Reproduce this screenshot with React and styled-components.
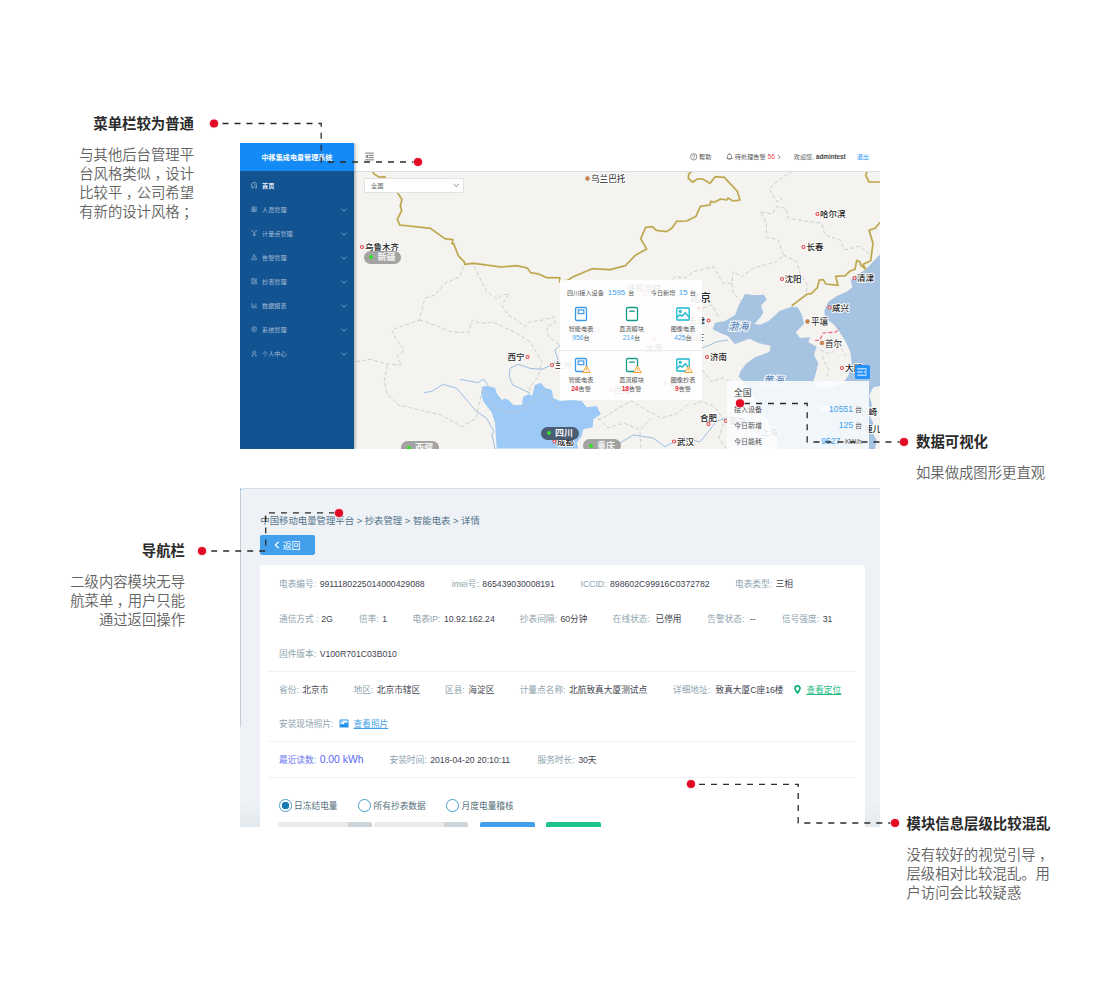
import React from "react";
import styled, { createGlobalStyle, css } from "styled-components";

const sans = `"Liberation Sans", "Noto Sans CJK SC", sans-serif`;

const Global = createGlobalStyle`
  *, *::before, *::after { box-sizing: border-box; }
  body { margin: 0; background: #fff; font-family: ${sans}; }
`;

/* ---------- page and notes ---------- */

const Page = styled.div`
  position: relative;
  display: flex;
  width: 1120px;
  height: 1000px;
  overflow: hidden;
  background: #fff;
`;

const NoteColumn = styled.aside`
  width: 240px;
  display: flex;
  flex-direction: column;
  align-items: ${(p) => (p.$right ? "flex-end" : "flex-start")};
  text-align: ${(p) => (p.$right ? "right" : "left")};
  padding-top: ${(p) => p.$top}px;
`;

const NoteBox = styled.section`
  margin: ${(p) => p.$margin};
  font-family: "Noto Sans CJK SC", sans-serif;
  white-space: nowrap;
`;

const NoteTitle = styled.h2`
  margin: 0 0 11px;
  font-size: 14.4px;
  line-height: 20px;
  font-weight: 700;
  color: #2a2a2a;
`;

const NoteText = styled.p`
  margin: 0;
  font-size: 14.35px;
  line-height: 19.1px;
  font-weight: 350;
  color: #626262;
`;

const Mark = styled.span`
  display: inline-block;
  width: 1em;
  text-indent: 0.24em;
`;

const Screens = styled.main`
  width: 640px;
  padding-top: 143px;
  display: flex;
  flex-direction: column;
  gap: 39px;
`;

const Connectors = styled.svg`
  position: absolute;
  inset: 0;
  z-index: 5;
  pointer-events: none;
`;

function Note({ title, lines, margin }) {
  return (
    <NoteBox $margin={margin}>
      <NoteTitle>{title}</NoteTitle>
      {lines.map((line) => (
        <NoteText key={line}>
          {line.split(/([，；])/).map((s, i) =>
            s === "，" || s === "；" ? <Mark key={i}>{s}</Mark> : s
          )}
        </NoteText>
      ))}
    </NoteBox>
  );
}

/* ---------- dashboard ---------- */

const Dashboard = styled.section`
  display: flex;
  height: 306px;
  overflow: hidden;
`;

const Sidebar = styled.nav`
  position: relative;
  z-index: 2;
  width: 114px;
  background: #125392;
  box-shadow: 1px 0 3px rgba(0, 0, 0, 0.35);
`;

const Brand = styled.div`
  height: 28px;
  display: flex;
  align-items: center;
  justify-content: center;
  background: #148af7;
  color: #fff;
  font-size: 7.1px;
  font-weight: 700;
  margin-bottom: 2.6px;
`;

const MenuItem = styled.div`
  height: 24px;
  display: flex;
  align-items: center;
  gap: 5px;
  padding: 0 7px 0 10.5px;
  font-size: 6.15px;
  font-weight: ${(p) => (p.$active ? 700 : 400)};
  color: ${(p) => (p.$active ? "#e6eef6" : "#a3bcd6")};

  svg { flex: none; }
  svg:last-child:not(:first-child) { margin-left: auto; }
`;

const Body = styled.div`
  flex: 1;
  display: flex;
  flex-direction: column;
`;

const TopBar = styled.header`
  height: 28.5px;
  flex: none;
  display: flex;
  align-items: center;
  padding: 0 11px 0 10.5px;
  background: #fff;
  border-bottom: 1px solid #dfdfdf;
  font-size: 6.15px;
  color: #555;
  white-space: nowrap;
`;

const TopItem = styled.span`
  display: flex;
  align-items: center;
  gap: 2px;
  margin-left: ${(p) => p.$ml || "0"};
  color: ${(p) => p.$color || "inherit"};
  b { font-size: 6.3px; color: #444; }
  em { font-style: normal; font-size: 6.8px; color: #f5484e; }
`;

const MapArea = styled.div`
  position: relative;
  flex: 1;
  overflow: hidden;
  background: #f4f3ef;
`;

const MapDrawing = styled.svg`
  position: absolute;
  left: 0;
  bottom: 0;
  font-family: "Noto Sans CJK SC", sans-serif;
`;

const RegionSelect = styled.div`
  position: absolute;
  left: 10px;
  top: 6.5px;
  width: 100px;
  height: 14.5px;
  display: flex;
  align-items: center;
  justify-content: space-between;
  padding: 0 4px 0 6px;
  background: #fff;
  border: 1px solid #e2e2e2;
  border-radius: 1px;
  font-size: 6.2px;
  color: #666;
`;

const RegionPill = styled.div`
  position: absolute;
  left: ${(p) => p.$x - 354}px;
  top: ${(p) => p.$y - 171.5}px;
  width: 37.5px;
  height: 13px;
  display: flex;
  align-items: center;
  gap: 4px;
  padding-left: 5.5px;
  border-radius: 7px;
  background: ${(p) => (p.$active ? "rgba(66,84,104,.92)" : "rgba(140,140,140,.78)")};
  color: #f4f4f4;
  font-size: 9px;
  font-weight: 700;
  line-height: 12px;

  &::before {
    content: "";
    width: 4.4px;
    height: 4.4px;
    border-radius: 50%;
    background: #35e02c;
  }
`;

const Popup = styled.div`
  position: absolute;
  left: 206px;
  top: 108.5px;
  width: 142px;
  height: 120px;
  background: rgba(255, 255, 255, 0.9);
  font-size: 6.15px;
  color: #555;
`;

const PopupHead = styled.div`
  display: flex;
  align-items: center;
  height: 25px;
  padding: 0 6px 0 7px;
`;

const Num = styled.span`
  color: #3fa0ee;
  font-size: ${(p) => p.$size || 7.8}px;
  margin: ${(p) => p.$m || "0"};
`;

const Spacer = styled.span`
  flex: 1;
`;

const DeviceGrid = styled.div`
  display: grid;
  grid-template-columns: 42px 59px 44px;
  height: ${(p) => p.$h}px;
  padding-top: ${(p) => p.$pt}px;
  border-bottom: ${(p) => (p.$line ? "1px solid #eaeaea" : "0")};
`;

const Device = styled.div`
  display: flex;
  flex-direction: column;
  align-items: center;
  line-height: 9px;
  white-space: nowrap;
  svg { margin-bottom: 2px; overflow: visible; }
`;

const Count = styled.span`
  line-height: 9px;
  b {
    font-weight: ${(p) => (p.$alarm ? 700 : 400)};
    font-size: 6.7px;
    color: ${(p) => (p.$alarm ? "#f02a3c" : "#3fa0ee")};
  }
`;

const Summary = styled.div`
  position: absolute;
  left: 373px;
  top: 209.5px;
  width: 142px;
  height: 80px;
  padding: 4px 7px 0;
  background: rgba(250, 252, 254, 0.9);
  color: #555;
  font-size: 7px;
`;

const SummaryTitle = styled.div`
  font-size: 8.8px;
  line-height: 16px;
  color: #444;
`;

const SummaryRow = styled.div`
  display: flex;
  justify-content: space-between;
  align-items: center;
  height: 16px;
`;

const FoldButton = styled.div`
  position: absolute;
  left: 501px;
  top: 193.5px;
  width: 14.5px;
  height: 14px;
  display: flex;
  align-items: center;
  justify-content: center;
  border-radius: 1.5px;
  background: #2492fa;
`;

/* ---------- detail page ---------- */

const Detail = styled.section`
  position: relative;
  height: 339px;
  overflow: hidden;
  display: flex;
  flex-direction: column;
  padding: 0 15.5px 0 20.3px;
  background: linear-gradient(#eef2f6 0 92%, #e4e9ed);
  border-top: 1px solid #d2dee9;

  &::before {
    content: "";
    position: absolute;
    left: 0;
    top: -1px;
    width: 1px;
    height: 239px;
    background: linear-gradient(#4b9de0 0 2px, #c6cdd4 2px);
  }
`;

const Crumbs = styled.div`
  flex: none;
  margin-top: 24px;
  height: 16px;
  line-height: 16px;
  font-size: 9.39px;
  color: #54738a;
  white-space: nowrap;
`;

const BackButton = styled.div`
  flex: none;
  margin-top: 6px;
  width: 55px;
  height: 20px;
  display: flex;
  align-items: center;
  gap: 1.5px;
  padding-left: 13px;
  border-radius: 2px;
  background: #429fec;
  color: #fff;
  font-size: 8.8px;
`;

const Card = styled.div`
  margin-top: 10px;
  flex: none;
  height: 270px;
  padding: 1px 9px 0 8px;
  border-radius: 3px 3px 0 0;
  background: #fff;
`;

const Row = styled.div`
  display: grid;
  grid-template-columns: ${(p) => p.$cols};
  align-items: center;
  height: ${(p) => p.$h || 35}px;
  padding-left: 10.7px;
  font-size: 8.7px;
  color: #3f4450;
  white-space: nowrap;
`;

const Block = styled.div`
  border-bottom: 1px solid #f1f2f3;
`;

const Field = styled.div`
  display: flex;
  align-items: center;
  gap: ${(p) => p.$gap || 3.5}px;
  ${(p) => p.$accent && css`
    color: #5868f5;
    span:first-child { color: #6c78f3; }
    span:last-child { font-size: 10.4px; }
  `}
`;

const Label = styled.span`
  color: #8ea3ae;
`;

const Link = styled.a`
  color: ${(p) => p.$color};
  text-decoration: underline;
  text-underline-offset: 1px;
`;

const Radios = styled.div`
  display: grid;
  grid-template-columns: 79.5px 88px auto;
  height: 43.5px;
  padding: 12px 0 0 10.7px;
  font-size: 8.7px;
  color: #56707c;
`;

const Radio = styled.label`
  display: flex;
  align-items: center;
  gap: 2.5px;
  height: 30px;
  white-space: nowrap;

  &::before {
    content: "";
    width: 12.6px;
    height: 12.6px;
    border-radius: 50%;
    border: 1px solid #4a9ccb;
    background: ${(p) => (p.$on ? "radial-gradient(circle, #1879b4 0 3.5px, #fff 4px)" : "#fff")};
  }
`;

const Controls = styled.div`
  display: flex;
  padding-left: 10.2px;
`;

const Control = styled.div`
  width: ${(p) => p.$w}px;
  height: 20px;
  margin-right: ${(p) => p.$mr}px;
  border-radius: 2px;
  background: ${(p) => p.$bg};
`;

/* ---------- small icons ---------- */

const Ico = ({ size = 7, color = "currentColor", w = 1.4, children }) => (
  <svg width={size} height={size} viewBox="0 0 16 16" fill="none" stroke={color} strokeWidth={w} strokeLinecap="round" strokeLinejoin="round">
    {children}
  </svg>
);

const Chevron = ({ size = 6, w = 1.8 }) => (
  <Ico size={size} w={w}><path d="M2 5.5l6 5.5 6-5.5" /></Ico>
);

const menu = [
  ["首页", <path d="M4.500 14a6.800 6.800 0 1 1 7 0M2.500 14h3M10.500 14h3M8 10l2.500-3.500" />],
  ["人员管理", <path d="M4 2.500h9v5H4zM6.500 2.500v5M2 9.500h12l-1 4H2zM6 9.500v4M10 9.500v4" />],
  ["计量点管理", <path d="M3 2l5 6 5-6M8 8v6M5.500 14h5M1.500 2h3M11.500 2h3M5.500 10.500h5" />],
  ["告警管理", <path d="M8 2l6.500 12h-13zM8 6.500v3.500M8 12v.2" />],
  ["抄表管理", <path d="M1.500 2h13v12h-13zM5 2v12M8 5.500h4M8 8h4M8 10.500h4" />],
  ["数据报表", <path d="M2 3v11h12M5.500 7.500V11M8.500 9V11M12 4v7" />],
  ["系统管理", <path d="M8 1.500l2 1.600 2.600-.2.500 2.600L15 8l-1.900 2.500-.5 2.600-2.600-.2L8 14.500l-2-1.600-2.600.2-.5-2.600L1 8l1.900-2.500.5-2.600 2.600.2zM5.500 8a2.500 2.500 0 1 0 5 0 2.500 2.500 0 1 0-5 0" />],
  ["个人中心", <path d="M4.500 5.500a3.500 3.500 0 1 0 7 0 3.500 3.500 0 1 0-7 0M3.500 14.500c0-3 1.500-5 3-5.500M12.500 14.500c0-3-1.500-5-3-5.500M2.500 14.500h3M10.500 14.500h3" />],
];

const Warn = () => (
  <g transform="translate(8.500 8.500)">
    <path d="M4 .5L7.800 7H.2z" fill="#fff8ec" stroke="#f7a53b" strokeWidth="1" strokeLinejoin="round" />
    <path d="M4 2.500v2.300M4 5.600v.5" stroke="#f7a53b" strokeWidth=".8" />
  </g>
);

function DeviceIcon({ kind, warn }) {
  return (
    <svg width="14" height="16" viewBox="0 0 14 16" fill="none" strokeWidth="1.300">
      {kind === "meter" && (
        <g stroke="#3c98e8">
          <rect x="1.500" y="1.500" width="11" height="13" rx="1.200" />
          <rect x="4.200" y="4" width="5.600" height="3.600" strokeWidth="1.200" />
        </g>
      )}
      {kind === "dc" && (
        <g stroke="#179b88">
          <rect x="1.500" y="1.500" width="11" height="13" rx="1.200" />
          <path d="M4.200 5.200h5.600" />
        </g>
      )}
      {kind === "image" && (
        <g stroke="#17b9cf" strokeLinejoin="round">
          <rect x=".8" y="2" width="12.400" height="12" rx=".8" />
          <path d="M1 11.500l3-3 2 1.700 3.200-3.400 4 4.500" />
          <circle cx="4.300" cy="5.300" r="1" />
        </g>
      )}
      {warn && <Warn />}
    </svg>
  );
}

/* ---------- map ---------- */

const borders = [
  "372.3,171 374,174 379,177 384.5,176.7 386,179 390.7,178.7 397.3,192.7 402,199.3 400.3,206 401.7,210.7 397.3,219.3 399.7,225 430.3,228.3 445,238.7 453,239.7 452,243.7 453.7,243.7 458.3,255.7 464.3,262 464.7,264.3 473.7,263.3 501,267 516.7,265.7 527.3,268 530.7,272.7 538.7,274 546.7,277.7 559.7,277.7 559.7,282 568.3,280 572.7,277 592.3,268.7 610,269.7 625.3,265.7 635.3,255.3 646.7,249 640.7,238.7 645.7,227.3 652.3,226.7 656.3,230.3 666.3,231.7 671.7,228.3 676.7,221.3 686.7,221 696,216.3 700.3,206.3 710,205 710.7,201.3 714,202.3 720.7,199 726.7,200 728,198 733,201 740,200 737.3,191.3 724.3,177.3 715.3,176.7 710,183.3 702.7,179 697.3,179 692.7,182.3 688.3,178.3 688.7,174.3 692,171",
  "867.3,171 865.7,175.3 869,182 880,182",
  "880,222.3 875,228.3 869,230.3 873,243.3 870.7,260.7 863,264.3 865.7,269.3 860.7,265 860,262 856.7,260.3 855,269.3 850,271 845.3,275.7 835.7,276.3 838,285.3 826,284 823.3,279.7 819.3,280 817.3,287.7 811.3,293.7 807.3,294 791.7,305.7",
];

const provinces = [
  "474,266 480,278 486.7,291.7 496.7,299 502,295 509.3,294 501.7,305 508.3,315 516.7,320 525,326.7 530,321.7 543.3,320 554,316.7 555,323 546.7,326.7 548.3,336.7 560,345",
  "463.3,266 460,276.7 445,283.3 435,295 425,298 419.3,320 391.7,330 396.7,340 404.3,350 396.7,356.7 402,365 386.7,364 370,359.3 354,362",
  "419.3,320 435,325 450,331.7 468.3,332.7 472.3,320 480,323.3 493.3,322.3 516.7,333.3 530,341.7 541.7,361.7 538.3,376.7 530,386.7 529,394",
  "387.3,365 384.3,380 386.7,393.3 398.3,405 420,410 441.7,415 461.7,426.7 476,418.3 480,400 483,388 492,404 500,409 513,413 522,409 530,403 544,390 552,400 562,412",
  "793,171 783.3,176.7 769,188.3 776.7,201.7 782,199 778,195",
  "869.3,254 860,246 845,250 840,240 825,235 821.7,223.3 803.3,220.7 788.3,218.3 786,208.3 776.7,206.7 772,214 760,211.7 766.7,223.3 766,236.7 778.3,240 783.3,255 776.7,261.7 753.3,268.3 741.7,276.7 733.3,271.7 731.7,283.3 723.3,283.3 713.3,266.7 693.3,271.7 685,278 675,276.7 670,283",
  "783.3,255 796.7,261.7 800,273.3 807.3,285 806,294",
  "731.7,283.3 733,293 741,301",
  "703,308 712,305 719,318",
  "598,420 606,416 620,407 632,401 646,410 661,418 676,414 690,403",
  "702,370 712,382 722,378 736,384",
  "598,418 608,428 624,423 640,430 651,418",
  "693,405 702,401 715,407 724,421 719,438 727,449",
  "640,432 641,449",
  "820,350 830,354 840,347 846,356",
  "822,356 829,371 826,378",
];

const rivers = [
  "424,392.7 431.7,391.3 443.3,384.3 456.7,388.3 476.7,411.7 486.7,418.3 494,431.7 492,434 495,449",
  "460,379.3 478.3,382.7 483.3,379 488,385",
  "560,345 555,350 558,360 551.7,365 541.7,369.3 530,368.3 518.3,364.3 510,368.3 509.3,376.7 512.7,385 530,393",
  "600,449 608,443 620,443 633.3,435 653,438 665,446.7 683,437 700,442 716.7,421 727,418",
  "702,348 710,345 716,342 728,340",
];

const cities = [
  ["乌鲁木齐", 362, 247, 365], ["哈尔滨", 817.5, 214, 820], ["长春", 803.5, 247, 806.5],
  ["沈阳", 782, 279, 784.5], ["清津", 854.5, 278, 857], ["咸兴", 829.5, 307.5, 832],
  ["大邱", 842, 368, 845], ["济南", 707, 357, 710], ["武汉", 674, 441.5, 677],
  ["成都", 554.5, 441.5, 557], ["兰州", 552, 365, 555], ["南京", 726, 421, 729],
  ["上海", 758, 432, 761], ["西安", 611.5, 390, 614], ["郑州", 666, 383, 669],
];

/* Coastlines are plotted on a grid three times finer than the map's. */
const Sea = () => (
  <g transform="translate(700 280) scale(.33333)">
    <path
      fill="#a6c3e2"
      d="M540-75L535-72 515-50 495-30 470-15 452 0 457 22 440 35 410 48 385 65 373 92 376 115 400 132 415 150 437 185 451 215 455 250 446 285 430 308 400 322 355 325 340 305 346 285 355 250 342 225 350 200 325 186 330 172 300 174 287 157 312 132 306 104 293 82 275 80 240 92 205 124 180 134 163 132 180 113 190 98 183 76 200 60 192 44 165 46 135 42 118 72 105 105 75 123 45 128 38 148 62 160 84 168 104 192 128 184 148 176 178 190 212 197 208 216 165 232 140 250 122 272 116 290 134 308 150 330 190 400 215 440 240 507 554 507 554-75z"
    />
    <path fill="#f4f3ef" d="M554 315L520 322 508 345 516 375 505 400 520 430 515 455 530 480 525 507 554 507z" />
    <g fill="#f4f3ef" stroke="none">
      <circle cx="352" cy="310" r="4" />
      <ellipse cx="375" cy="385" rx="16" ry="7" />
    </g>
  </g>
);

function ChinaMap() {
  return (
    <MapDrawing width="526" height="278" viewBox="354 171 526 278">
      <Sea />
      <path fill="#9cc9f5" d="M482.3 386.7l4.400-1 8.300 2 1.700 5.600 5 6.700 4-1.500 3.600 2.200 4 4.300h8.400l1.600-8.300 5.700-2.700 3 2 3-11 5.700-2.300 4.300 5 6.700 2.300 1.600 8.300 6.700 2.700 11-1 10.700 1 5 6.300 10-1.300 4 8.300-7.400 5-.6 8-9.400 2-1.600 6.700-5 6.600 1.500 6h-81.500l-1.700-26-3.300-10-8.400-11.300-2.300-8.400z" />
      <path fill="#f4f3ef" d="M508 399l6-2 7 3 2 4-8 1z" />
      {provinces.map((p) => (
        <polyline key={p} points={p} fill="none" stroke="#c9c9cb" strokeWidth=".9" strokeDasharray="4 2.200" />
      ))}
      {rivers.map((p) => (
        <polyline key={p} points={p} fill="none" stroke="#94b9e0" strokeWidth=".9" strokeLinejoin="round" />
      ))}
      {borders.map((p) => (
        <g key={p} fill="none" strokeLinejoin="round">
          <polyline points={p} stroke="#d9cd93" strokeWidth="2" />
          <polyline points={p} stroke="#b9a24a" strokeWidth="1.200" />
        </g>
      ))}
      <polyline points="815,340.5 820,340 823,333 836,332 839,328" fill="none" stroke="#e0618a" strokeWidth="1.200" strokeDasharray="4 2" />
      <g fontSize="8.500" fontWeight="500" fill="#222" stroke="#fff" strokeWidth="1.800" paintOrder="stroke" strokeLinejoin="round">
        {cities.map(([name, , y, tx]) => <text key={name} x={tx} y={y + 3.4}>{name}</text>)}
        <text x="507.500" y="360.300">西宁</text>
        <text x="700" y="421.300">合肥</text>
        <text x="688" y="324">天津</text>
        <text x="678.500" y="340">石家庄</text>
        <text x="646" y="350.500">太原</text>
        <text x="627" y="290.500">呼和浩特</text>
        <text x="583" y="332.500">银川</text>
        <text x="860" y="414.500">长崎</text>
        <text x="864" y="431.500">鹿儿岛</text>
        <text x="689" y="302" fontSize="11">北京</text>
        <g fontWeight="400" fontSize="8.600">
          <text x="591" y="181.700">乌兰巴托</text>
          <text x="811" y="325">平壤</text>
          <text x="825" y="346.500">首尔</text>
        </g>
      </g>
      <g fontSize="10.300" fontStyle="italic" fontWeight="500" fill="#5a85b8" stroke="#fff" strokeWidth="1.800" paintOrder="stroke">
        <text x="728" y="329.500">渤海</text>
        <text x="763" y="384">黄海</text>
      </g>
      <g fill="#fff" stroke="#e2474d" strokeWidth="1.100">
        {cities.map(([name, x, y]) => <circle key={name} cx={x} cy={y} r="1.500" />)}
        <circle cx="527.500" cy="357" r="1.500" />
        <circle cx="708.500" cy="424" r="1.500" />
        <circle cx="708.500" cy="320.500" r="1.500" />
        <circle cx="644" cy="294" r="1.500" />
        <circle cx="654" cy="339" r="1.500" />
      </g>
      <g fill="#df7a30" stroke="#a8937c" strokeWidth=".9">
        <circle cx="587.500" cy="178.500" r="1.900" />
        <circle cx="807.500" cy="321.500" r="1.900" />
        <circle cx="822" cy="343" r="1.900" />
      </g>
      <path fill="#e8352e" d="M699 305l1 2.300 2.500.2-2 1.600.7 2.500-2.200-1.400-2.200 1.400.7-2.500-2-1.600 2.500-.2z" />
    </MapDrawing>
  );
}

const devices = [
  ["meter", "智能电表", "956"],
  ["dc", "直流模块", "214"],
  ["image", "图像电表", "425"],
];
const alarms = [
  ["meter", "智能电表", "24"],
  ["dc", "直流模块", "18"],
  ["image", "图像抄表", "9"],
];

function DashboardScreen() {
  return (
    <Dashboard>
      <Sidebar>
        <Brand>中移集成电量管理系统</Brand>
        {menu.map(([name, icon], i) => (
          <MenuItem key={name} $active={i === 0}>
            <Ico size={6.5}>{icon}</Ico>
            {name}
            {i > 0 && <Chevron />}
          </MenuItem>
        ))}
      </Sidebar>
      <Body>
        <TopBar>
          <Ico size={9}><path d="M1 2h14M7 6h8M7 10h8M1 14h14M4 6L1 8l3 2z" /></Ico>
          <Spacer />
          <TopItem>
            <Ico size={7.5} w={1.3}><circle cx="8" cy="8" r="7" /><path d="M5.800 6.300c0-3 4.500-3 4.500-.2 0 1.600-2.300 1.700-2.300 3.500M8 11.800v.2" /></Ico>
            帮助
          </TopItem>
          <TopItem $ml="14.5px">
            <Ico size={7} w={1.4}><path d="M2 12.500h12M3.500 12.500V7a4.500 4.500 0 0 1 9 0v5.500M8 1v1.500M6.500 15h3" /></Ico>
            待处理告警<em>56</em>
            <Ico size={4.5} w={2.6}><path d="M4 1l7 7-7 7" /></Ico>
          </TopItem>
          <TopItem $ml="12.2px">欢迎您, <b>admintest</b></TopItem>
          <TopItem $ml="11px" $color="#2b97f5">退出</TopItem>
        </TopBar>
        <MapArea>
          <ChinaMap />
          <RegionSelect>全国<Chevron size={6.5} /></RegionSelect>
          <RegionPill $x={363.5} $y={250.5}>新疆</RegionPill>
          <RegionPill $x={541} $y={426.5} $active>四川</RegionPill>
          <RegionPill $x={583} $y={439.3}>重庆</RegionPill>
          <RegionPill $x={401} $y={441.3}>西藏</RegionPill>
          <Popup>
            <PopupHead>
              四川接入设备<Num $m="0 3px 0 4px">1595</Num>台
              <Spacer />
              今日新增<Num $m="0 2.3px 0 3.5px">15</Num>台
            </PopupHead>
            <DeviceGrid $h={46} $pt={1.3} $line>
              {devices.map(([kind, name, n]) => (
                <Device key={name}>
                  <DeviceIcon kind={kind} />
                  {name}
                  <Count><b>{n}</b>台</Count>
                </Device>
              ))}
            </DeviceGrid>
            <DeviceGrid $h={49} $pt={5.5}>
              {alarms.map(([kind, name, n]) => (
                <Device key={name}>
                  <DeviceIcon kind={kind} warn />
                  {name}
                  <Count $alarm><b>{n}</b>告警</Count>
                </Device>
              ))}
            </DeviceGrid>
          </Popup>
          <FoldButton>
            <Ico size={10} color="#fff" w={1.5}><path d="M1 3h14M1 8h8M1 13h14M15 6l-3 2 3 2" /></Ico>
          </FoldButton>
          <Summary>
            <SummaryTitle>全国</SummaryTitle>
            <SummaryRow>接入设备<span><Num $size={8.6} $m="0 2px 0 0">10551</Num>台</span></SummaryRow>
            <SummaryRow>今日新增<span><Num $size={8.6} $m="0 2px 0 0">125</Num>台</span></SummaryRow>
            <SummaryRow>今日能耗<span><Num $size={8.6} $m="0 4.5px 0 0">9527</Num>KW/h</span></SummaryRow>
          </Summary>
        </MapArea>
      </Body>
    </Dashboard>
  );
}

const F = ({ l, v, gap, accent, children }) => (
  <Field $gap={gap} $accent={accent}>
    <Label>{l}</Label>
    {v && <span>{v}</span>}
    {children}
  </Field>
);

function DetailScreen() {
  return (
    <Detail>
      <Crumbs>中国移动电量管理平台 &gt; 抄表管理 &gt; 智能电表 &gt; 详情</Crumbs>
      <BackButton>
        <Ico size={8} w={2.2}><path d="M11 2L4.500 8l6.500 6" /></Ico>返回
      </BackButton>
      <Card>
        <Block>
          <Row $cols="172.8px 128.7px 154.5px auto">
            <F l="电表编号:" v="9911180225014000429088" />
            <F l="imei号:" v="865439030008191" />
            <F l="ICCID:" v="898602C99916C0372782" />
            <F l="电表类型:" v="三相" />
          </Row>
          <Row $cols="80px 53.5px 107.3px 93px 94.5px 74.7px auto">
            <F l="通信方式 :" v="2G" gap={2.6} />
            <F l="倍率:" v="1" />
            <F l="电表IP:" v="10.92.162.24" />
            <F l="抄表间隔:" v="60分钟" />
            <F l="在线状态:" v="已停用" gap={5.5} />
            <F l="告警状态:" v="--" gap={5.5} />
            <F l="信号强度:" v="31" />
          </Row>
          <Row $cols="auto">
            <F l="固件版本:" v="V100R701C03B010" />
          </Row>
        </Block>
        <Block>
          <Row $h={34.2} $cols="74.5px 91.5px 74.7px 153.3px 121px auto">
            <F l="省份:" v="北京市" />
            <F l="地区:" v="北京市辖区" />
            <F l="区县:" v="海淀区" />
            <F l="计量点名称:" v="北航致真大厦测试点" />
            <F l="详细地址:" v="致真大厦C座16楼" gap={5.3} />
            <Field $gap={5.5}>
              <svg width="7" height="9" viewBox="0 0 7 9" fill="none"><path d="M3.500 8C1.700 5.600 1 4.500 1 3.400a2.500 2.500 0 0 1 5 0c0 1.100-.7 2.200-2.500 4.600z" stroke="#12b377" strokeWidth="1.700" /></svg>
              <Link $color="#25bb83">查看定位</Link>
            </Field>
          </Row>
          <Row $cols="auto">
            <F l="安装现场照片:" gap={5}>
              <svg width="10" height="9" viewBox="0 0 10 9"><rect x=".5" y=".5" width="9" height="8" rx=".6" fill="#2490e8" /><path d="M1.500 1.500h7v3l-2-1.500-2 2.500-1.500-1-1.500 1.500z" fill="#fff" /><circle cx="3" cy="2.800" r=".8" fill="#2490e8" /></svg>
              <Link $color="#3f9fe8">查看照片</Link>
            </F>
          </Row>
        </Block>
        <Block>
          <Row $cols="110.5px 148px auto" $h={35.3}>
            <F l="最近读数:" v="0.00 kWh" accent />
            <F l="安装时间:" v="2018-04-20 20:10:11" />
            <F l="服务时长:" v="30天" />
          </Row>
        </Block>
        <Radios>
          <Radio $on>日冻结电量</Radio>
          <Radio>所有抄表数据</Radio>
          <Radio>月度电量稽核</Radio>
        </Radios>
        <Controls>
          <Control $w={94} $mr={1.7} $bg="linear-gradient(90deg, #eaeaea 74%, #cbd5da 74%)" />
          <Control $w={94} $mr={11.8} $bg="linear-gradient(90deg, #eaeaea 74%, #cbd5da 74%)" />
          <Control $w={55} $mr={11.2} $bg="#429fec" />
          <Control $w={55} $mr={0} $bg="#1fc588" />
        </Controls>
      </Card>
    </Detail>
  );
}

const links = [
  ["M222.500 123.500H321.200V162H414", [214, 123.5], [418, 162]],
  ["M744 403.500H807.200V442H900", [740, 403.3], [904, 442]],
  ["M335 512.800H265.700V551H206", [339, 513], [202, 551]],
  ["M699 784.300H798.200V823H891", [691, 784], [895, 823]],
];

export default function App() {
  return (
    <>
      <Global />
      <Page>
        <NoteColumn $right $top={113}>
          <Note margin="0 46px 0 0" title="菜单栏较为普通" lines={["与其他后台管理平", "台风格类似，设计", "比较平，公司希望", "有新的设计风格；"]} />
          <Note margin="319.5px 55px 0 0" title="导航栏" lines={["二级内容模块无导", "航菜单，用户只能", "通过返回操作"]} />
        </NoteColumn>
        <Screens>
          <DashboardScreen />
          <DetailScreen />
        </Screens>
        <NoteColumn $top={431}>
          <Note margin="0 0 0 36px" title="数据可视化" lines={["如果做成图形更直观"]} />
          <Note margin="331.5px 0 0 26.5px" title="模块信息层级比较混乱" lines={["没有较好的视觉引导，", "层级相对比较混乱。用", "户访问会比较疑惑"]} />
        </NoteColumn>
        <Connectors width="1120" height="1000">
          {links.map(([d, a, b]) => (
            <g key={d}>
              <path d={d} fill="none" stroke="#2b2b2b" strokeWidth="1.300" strokeDasharray="6 6" />
              {[a, b].map(([x, y]) => (
                <g key={x}>
                  <circle cx={x} cy={y} r="5" fill="#fbd9dd" fillOpacity=".7" />
                  <circle cx={x} cy={y} r="4.100" fill="#e50a24" />
                </g>
              ))}
            </g>
          ))}
        </Connectors>
      </Page>
    </>
  );
}
